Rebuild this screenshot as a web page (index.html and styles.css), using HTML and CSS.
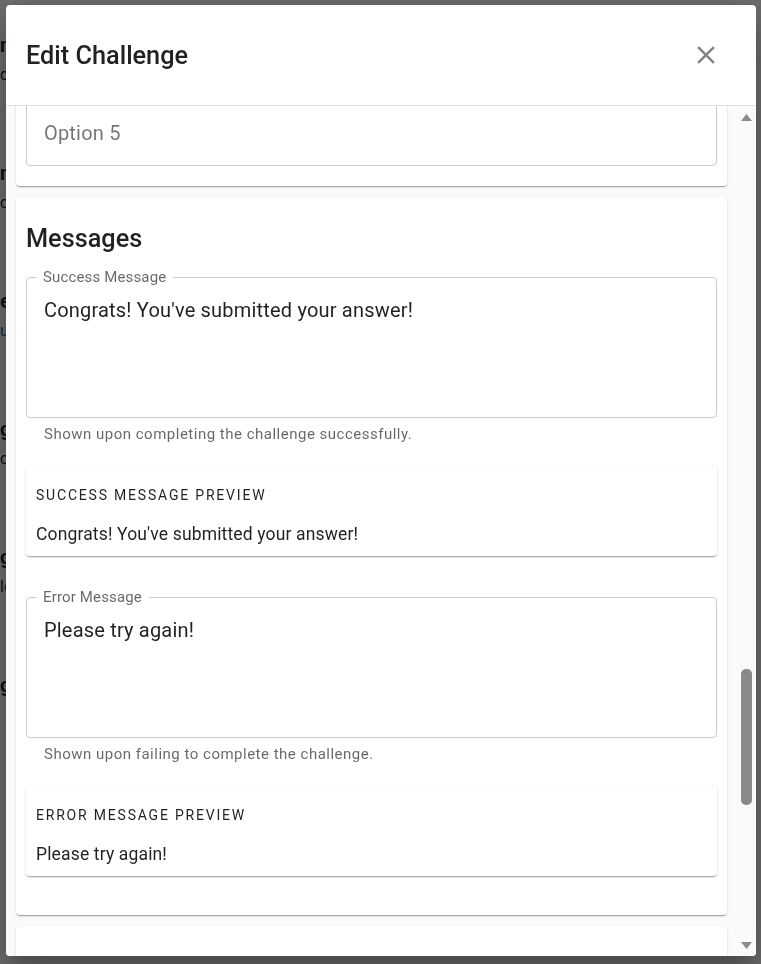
FILE: index.html
```html
<!DOCTYPE html>
<html lang="en">
<head>
<meta charset="utf-8">
<title>Edit Challenge</title>
<link rel="stylesheet" href="styles.css">
</head>
<body>
<main class="page">
  <div class="bg-item"><h3 class="bg-title">nature walk</h3><p class="bg-text">daily steps</p></div>
  <div class="bg-item"><h3 class="bg-title">night owl</h3><p class="bg-text">complete a quiz</p></div>
  <div class="bg-item"><h3 class="bg-title">explorer</h3><p class="bg-text bg-link">unlock more</p></div>
  <div class="bg-item"><h3 class="bg-title">green team</h3><p class="bg-text">collect points</p></div>
  <div class="bg-item"><h3 class="bg-title">gardening</h3><p class="bg-text">lcoal club</p></div>
  <div class="bg-item"><h3 class="bg-title">good deeds</h3></div>
</main>

<div class="backdrop">
  <section class="dialog" role="dialog" aria-labelledby="dlg-title">
    <header class="dialog-header">
      <h2 class="dialog-title" id="dlg-title">Edit Challenge</h2>
      <button class="close-btn" type="button" aria-label="Close">
        <svg viewBox="0 0 24 24" width="30" height="30" aria-hidden="true"><path d="M19 6.41 17.59 5 12 10.59 6.41 5 5 6.41 10.59 12 5 17.59 6.41 19 12 13.41 17.59 19 19 17.59 13.41 12z"/></svg>
      </button>
    </header>

    <div class="dialog-body">
      <div class="dialog-content" id="content">
        <div class="card" id="options-card">
          <h3 class="card-title">Options</h3>
          <div class="input">Option 1</div>
          <div class="input">Option 2</div>
          <div class="input">Option 3</div>
          <div class="input">Option 4</div>
          <div class="input">Option 5</div>
        </div>

        <div class="card">
          <h3 class="card-title">Messages</h3>
          <fieldset class="field field-multi"><legend>Success Message</legend><div class="field-value">Congrats! You've submitted your answer!</div></fieldset>
          <p class="helper">Shown upon completing the challenge successfully.</p>
          <div class="preview">
            <div class="preview-label">Success Message Preview</div>
            <div class="preview-text">Congrats! You've submitted your answer!</div>
          </div>
          <fieldset class="field field-multi"><legend>Error Message</legend><div class="field-value">Please try again!</div></fieldset>
          <p class="helper">Shown upon failing to complete the challenge.</p>
          <div class="preview preview-last">
            <div class="preview-label">Error Message Preview</div>
            <div class="preview-text">Please try again!</div>
          </div>
        </div>

        <div class="card card-next"></div>
      </div>

      <div class="scrollbar" aria-hidden="true">
        <div class="sb-btn sb-up"><svg viewBox="0 0 11 7" width="11" height="7"><polygon points="0,7 11,7 5.5,0"/></svg></div>
        <div class="sb-track"><div class="sb-thumb"></div></div>
        <div class="sb-btn sb-down"><svg viewBox="0 0 11 7" width="11" height="7"><polygon points="0,0 11,0 5.5,7"/></svg></div>
      </div>
    </div>
  </section>
</div>
<script src="script.js"></script>
</body>
</html>
```

FILE: styles.css
```css
* { box-sizing: border-box; }
html, body { margin: 0; height: 100%; }
body {
  font-family: Roboto, "Noto Sans", Arial, sans-serif;
  background: #ffffff;
  overflow: hidden;
}

/* underlying page (only its left edge peeks out beside the dialog) */
.page {
  width: 6px;
  overflow: hidden;
  padding-top: 30px;
}
.bg-item { height: 128px; }
.bg-title {
  margin: 0;
  font-size: 20px;
  font-weight: 700;
  line-height: 30px;
  color: #1b2a47;
  white-space: nowrap;
}
.bg-text {
  margin: 0;
  font-size: 16px;
  line-height: 30px;
  color: #2b2b2b;
  white-space: nowrap;
}
.bg-link { color: #1565c0; }

/* modal */
.backdrop {
  position: fixed;
  inset: 0;
  background: rgba(0, 0, 0, 0.58);
  display: flex;
  padding: 5px 5px 8px 6px;
}
.dialog {
  flex: 1;
  min-height: 0;
  background: #ffffff;
  border-radius: 4px;
  display: flex;
  flex-direction: column;
  overflow: hidden;
  box-shadow: 0 11px 15px -7px rgba(0,0,0,.2), 0 24px 38px 3px rgba(0,0,0,.14), 0 9px 46px 8px rgba(0,0,0,.12);
}
.dialog-header {
  flex: none;
  height: 101px;
  display: flex;
  align-items: center;
  justify-content: space-between;
  padding: 2px 30px 0 20px;
  border-bottom: 1px solid #e0e0e0;
}
.dialog-title {
  margin: 0;
  font-size: 25.3px;
  font-weight: 500;
  line-height: 32px;
  color: rgba(0, 0, 0, 0.87);
}
.close-btn {
  width: 40px;
  height: 40px;
  margin-top: -2px;
  padding: 5px;
  border: 0;
  background: none;
  display: flex;
  align-items: center;
  justify-content: center;
  cursor: pointer;
}
.close-btn svg { fill: rgba(0, 0, 0, 0.48); display: block; }

.dialog-body {
  flex: 1;
  min-height: 0;
  display: flex;
  background: #fafafa;
}
.dialog-content {
  flex: 1;
  min-width: 0;
  overflow: hidden;
  padding: 10px 14px 10px 10px;
  display: flex;
  flex-direction: column;
  gap: 11px;
}

/* scrollbar */
.scrollbar {
  flex: none;
  width: 15px;
  display: flex;
  flex-direction: column;
  background: #fafafa;
}
.sb-btn {
  flex: none;
  height: 21px;
  display: flex;
  align-items: flex-start;
}
.sb-up { padding-top: 8px; }
.sb-down { padding-top: 7px; }
.sb-btn svg { fill: #8c8c8c; display: block; }
.sb-track { flex: 1; min-height: 0; }
.sb-thumb {
  width: 11px;
  height: 136px;
  margin-top: 542px;
  border-radius: 5px;
  background: #8a8a8a;
}

.card {
  flex: none;
  background: #ffffff;
  border-radius: 4px;
  box-shadow: 0 2px 1px -1px rgba(0,0,0,.2), 0 1px 1px 0 rgba(0,0,0,.14), 0 1px 3px 0 rgba(0,0,0,.12);
  padding: 10px 10px 20px;
  display: flex;
  flex-direction: column;
}
.card-next { height: 400px; }
.card-title {
  margin: 16px 0 13px;
  font-size: 25.3px;
  font-weight: 500;
  line-height: 32px;
  color: rgba(0, 0, 0, 0.87);
}

/* outlined field with notched label */
.field {
  margin: 0 0 20px;
  padding: 0 8px 0 9px;
  border: 1px solid rgba(0, 0, 0, 0.2);
  border-radius: 4px;
  min-width: 0;
}
.field legend {
  padding: 0 7px;
  font-size: 15px;
  line-height: 18px;
  letter-spacing: 0.15px;
  color: rgba(0, 0, 0, 0.6);
}
.field-value {
  padding: 11px 8px 19px;
  font-size: 20px;
  line-height: 27px;
  letter-spacing: 0.19px;
  color: rgba(0, 0, 0, 0.87);
}
.field-multi { margin-bottom: 0; }
.field-multi .field-value { height: 131px; }

.helper {
  margin: 6px 0 22px 18px;
  font-size: 15px;
  line-height: 20px;
  letter-spacing: 0.5px;
  color: rgba(0, 0, 0, 0.6);
}

.input {
  height: 67px;
  margin-bottom: 20px;
  padding: 0 17px;
  border: 1px solid rgba(0, 0, 0, 0.2);
  border-radius: 4px;
  display: flex;
  align-items: center;
  font-size: 20px;
  letter-spacing: 0.19px;
  color: rgba(0, 0, 0, 0.55);
}
.input:last-child { margin-bottom: 0; }

.preview {
  background: #ffffff;
  border-radius: 4px;
  box-shadow: 0 2px 1px -1px rgba(0,0,0,.2), 0 1px 1px 0 rgba(0,0,0,.14), 0 1px 3px 0 rgba(0,0,0,.12);
  padding: 19px 10px 9px;
  margin-bottom: 32px;
}
.preview-last { margin-bottom: 19px; }
.preview-label {
  font-size: 14px;
  line-height: 20px;
  letter-spacing: 1.8px;
  text-transform: uppercase;
  color: rgba(0, 0, 0, 0.87);
}
.preview-text {
  margin-top: 16px;
  font-size: 17.5px;
  line-height: 26px;
  letter-spacing: 0.15px;
  color: rgba(0, 0, 0, 0.87);
}
```

FILE: script.js
```js
(function () {
  var content = document.getElementById('content');
  var card = document.getElementById('options-card');
  var delta = card.getBoundingClientRect().bottom - 186;
  content.scrollTop += delta;
})();
```
